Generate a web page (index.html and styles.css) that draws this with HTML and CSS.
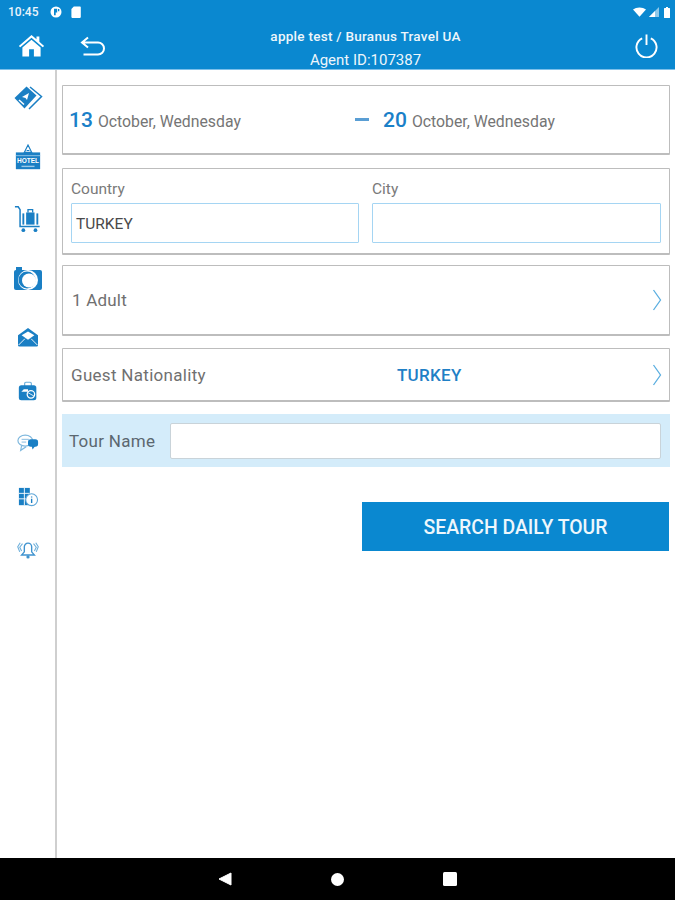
FILE: index.html
```html
<!DOCTYPE html>
<html lang="en">
<head>
<meta charset="utf-8">
<title>Daily Tour Search</title>
<link rel="stylesheet" href="styles.css">
</head>
<body>
<div class="screen">
  <header class="header">
    <div class="status">
      <div class="status-left">
        <span class="time">10:45</span>
        <svg class="st-ic" viewBox="0 0 12 12"><circle cx="6" cy="6" r="5.500" fill="#fff"/><path d="M4 2.800h3.200v3.600H5.700V9.200H4zM8 3h1.300v2.200H8z" fill="#0a88d0"/></svg>
        <svg class="st-ic" viewBox="0 0 12 12"><path d="M3.800 .5H10a.8.8 0 0 1 .8.8v9.800a.8.8 0 0 1-.8.8H2.200a.8.8 0 0 1-.8-.8V3z" fill="#fff"/></svg>
      </div>
      <div class="status-right">
        <svg class="wifi" viewBox="0 0 14 10"><path d="M0 2.200C3.800-.7 10.200-.7 14 2.200L7 10z" fill="#fff"/></svg>
        <svg class="signal" viewBox="0 0 10 10"><path d="M10 0v10H0z" fill="#fff" opacity=".55"/><path d="M6 4v6H0z" fill="#fff"/></svg>
        <svg class="battery" viewBox="0 0 6 11"><path d="M2 0h2v1h1.400a.6.6 0 0 1 .6.6v8.800a.6.6 0 0 1-.6.6H.6a.6.6 0 0 1-.6-.6V1.600a.6.6 0 0 1 .6-.6H2z" fill="#fff"/></svg>
      </div>
    </div>
    <div class="toolbar">
      <svg class="home" viewBox="0 0 28 24"><path d="M14 1 .8 12.400l1.500 1.500L14 3.900l11.700 10 1.500-1.500-5-4.300V2.500h-3v3z" fill="#fff"/><path d="M14 6 4.500 14v9.500h7V16h5v7.500h7V14z" fill="#fff"/></svg>
      <svg class="back" viewBox="0 0 26 20"><path d="M8 1.500 2 6.500l6 5M2.500 6.500H18a6 6 0 0 1 0 12H3.500" fill="none" stroke="#fff" stroke-width="2"/></svg>
      <div class="title">
        <div class="title-name">apple test / Buranus Travel UA</div>
        <div class="title-id">Agent ID:107387</div>
      </div>
      <svg class="power" viewBox="0 0 24 26"><path d="M7.500 5.500a10.500 10.500 0 1 0 9 0" fill="none" stroke="#fff" stroke-width="2"/><path d="M12 1.500v11" stroke="#fff" stroke-width="2"/></svg>
    </div>
  </header>

  <div class="main">
    <nav class="sidebar">
      <div class="nav-item h62"><svg class="ic" viewBox="0 0 30 26"><path d="M1.500 13 13.500 1.500l10 9-12 13z" fill="#1a7fc4"/><path d="m17 2 11.500 9.500L16 24" fill="none" stroke="#1a7fc4" stroke-width="1.500"/><path d="m9 12 7-4-2 7-1.500-2z" fill="#fff"/><path d="m6 15 5 4.500" stroke="#fff" stroke-width="1.500"/></svg></div>
      <div class="nav-item h59"><svg class="ic" viewBox="0 0 30 30"><path d="M15 1l-4 8h8zM13.500 7h3" fill="none" stroke="#1a7fc4" stroke-width="1.200"/><path d="M2 9h26v18H2z" fill="#1a7fc4"/><path d="M2 12.500h26" stroke="#8fc4e6"/><text x="15" y="20.500" class="hotel-text">HOTEL</text><path d="M8 24h14" stroke="#9cc9e8" stroke-width="1.500"/></svg></div>
      <div class="nav-item h61"><svg class="ic" viewBox="0 0 30 30"><path d="M1 2h3.500l2 3v18h21" fill="none" stroke="#1a7fc4" stroke-width="1.600"/><rect x="9" y="9" width="2" height="12" fill="#1a7fc4"/><rect x="13" y="8" width="9" height="13" fill="#1a7fc4"/><rect x="24" y="9" width="2" height="12" fill="#1a7fc4"/><path d="M15 8V5h5v3" fill="none" stroke="#1a7fc4" stroke-width="1.400"/><circle cx="10" cy="27" r="2" fill="#1a7fc4"/><circle cx="23" cy="27" r="2" fill="#1a7fc4"/></svg></div>
      <div class="nav-item h58"><svg class="ic" viewBox="0 0 30 26"><path d="M3 1h6v3H3z" fill="#1a7fc4"/><path d="M1 6a2 2 0 0 1 2-2h24a2 2 0 0 1 2 2v16a2 2 0 0 1-2 2H3a2 2 0 0 1-2-2z" fill="#1a7fc4"/><circle cx="15" cy="14" r="10" fill="#fff"/><circle cx="14" cy="14" r="8.500" fill="#1a7fc4"/><circle cx="16" cy="14.500" r="7" fill="#fff"/></svg></div>
      <div class="nav-item h53"><svg class="ic ic-sm" viewBox="0 0 24 22"><path d="M1 9 12 1l11 8v11a1.500 1.500 0 0 1-1.500 1.500h-19A1.500 1.500 0 0 1 1 20z" fill="#1a7fc4"/><path d="m5 9 7-4 7 4-7 5z" fill="#fff"/><path d="m1.500 20 7-7M22.500 20l-7-7" stroke="#fff"/></svg></div>
      <div class="nav-item h52b"><svg class="ic ic-sm" viewBox="0 0 24 24"><path d="M8 6V3a1.500 1.500 0 0 1 1.500-1.500h5A1.500 1.500 0 0 1 16 3v3" fill="none" stroke="#6aaedb" stroke-width="1.400"/><rect x="1" y="5" width="21" height="18" rx="3" fill="#1a7fc4"/><path d="M4 13h8v-3H7z" fill="#fff"/><circle cx="15.500" cy="16" r="4.500" fill="none" stroke="#fff" stroke-width="1.500"/><path d="m12 14 7 4" stroke="#fff"/></svg></div>
      <div class="nav-item h54"><svg class="ic ic-sm" viewBox="0 0 24 20"><ellipse cx="9" cy="7.500" rx="8" ry="6" fill="none" stroke="#7fb8de" stroke-width="1.300"/><path d="m5 13-1 5 6-4" fill="none" stroke="#7fb8de" stroke-width="1.300"/><path d="M5 6h8M5 9h5" stroke="#7fb8de"/><rect x="12" y="6" width="11" height="8" rx="3" fill="#1a7fc4"/><path d="m16 13 1 4 3-4z" fill="#1a7fc4"/></svg></div>
      <div class="nav-item h52"><svg class="ic ic-sm" viewBox="0 0 24 22"><rect x="2" y="1" width="12" height="19" fill="#1a7fc4"/><path d="M2 7h12M2 13h12M8 1v19" stroke="#fff"/><circle cx="16" cy="14" r="6.500" fill="#fff" stroke="#5ea6d8" stroke-width="1.200"/><path d="M16 10.500v1M16 13v4.500" stroke="#1a7fc4" stroke-width="1.500"/></svg></div>
      <div class="nav-item h52"><svg class="ic ic-sm" viewBox="0 0 24 20"><path d="M12 2.500a4 4 0 0 0-4 4V12l-3 3.500h14L16 12V6.500a4 4 0 0 0-4-4z" fill="none" stroke="#3f93cf" stroke-width="1.500"/><circle cx="12" cy="17.500" r="1.800" fill="#3f93cf"/><path d="M6 3 3 7l2 4M18 3l3 4-2 4M3.500 2 .8 6.500 3 12M20.500 2l2.700 4.500L21 12" fill="none" stroke="#6fb0db" stroke-width="1.200"/></svg></div>
    </nav>

    <section class="content">
      <div class="card dates">
        <div class="date date-from"><span class="day">13</span><span class="month">October, Wednesday</span></div>
        <span class="dash"></span>
        <div class="date"><span class="day">20</span><span class="month">October, Wednesday</span></div>
      </div>

      <div class="card places">
        <div class="field">
          <label class="field-label">Country</label>
          <div class="field-box">TURKEY</div>
        </div>
        <div class="field">
          <label class="field-label">City</label>
          <div class="field-box"></div>
        </div>
      </div>

      <div class="card row row-adult">
        <span class="row-label">1 Adult</span>
        <svg class="chev" viewBox="0 0 10 22"><path d="m1.500 1 7 10-7 10" fill="none" stroke="#5aaee0" stroke-width="1.300"/></svg>
      </div>

      <div class="card row row-nation">
        <span class="row-label">Guest Nationality</span>
        <span class="nation">TURKEY</span>
        <svg class="chev" viewBox="0 0 10 22"><path d="m1.500 1 7 10-7 10" fill="none" stroke="#5aaee0" stroke-width="1.300"/></svg>
      </div>

      <div class="tour">
        <span class="tour-label">Tour Name</span>
        <div class="tour-box"></div>
      </div>

      <div class="actions"><button class="search">SEARCH DAILY TOUR</button></div>
    </section>
  </div>

  <footer class="navbar">
    <svg class="nav-back" viewBox="0 0 14 14"><path d="M13 1v12L1 7z" fill="#fff" stroke="#fff" stroke-linejoin="round"/></svg>
    <span class="nav-home"></span>
    <span class="nav-square"></span>
  </footer>
</div>
</body>
</html>
```
FILE: styles.css
```css
* { box-sizing: border-box; }
html, body { margin: 0; padding: 0; }
body { background: #fff; font-family: Roboto, "Liberation Sans", sans-serif; }
.screen { width: 675px; height: 900px; display: flex; flex-direction: column; overflow: hidden; }

.header { height: 70px; flex: none; background: #0a88d0; border-bottom: 1px solid #7cc0ea; color: #fff; }
.status { height: 24px; display: flex; justify-content: space-between; align-items: center; padding: 0 5px 0 8px; }
.status-left { display: flex; align-items: center; }
.time { font-size: 12px; font-weight: 500; color: #eaf4fb; width: 42px; }
.st-ic { width: 12px; height: 12px; margin-right: 8px; }
.status-right { display: flex; align-items: center; gap: 2px; }
.wifi { width: 13px; height: 10px; }
.signal { width: 10px; height: 10px; margin-left: 1px; }
.battery { width: 6px; height: 11px; margin-left: 3px; }

.toolbar { height: 45px; display: flex; align-items: center; padding-left: 18px; padding-right: 17px; }
.home { width: 27px; height: 23px; margin-top: -2px; }
.back { width: 26px; height: 20px; margin-left: 35px; margin-top: -2px; }
.title { flex: 1; text-align: center; padding-right: 10px; padding-top: 2px; }
.title-name { font-size: 13.500px; font-weight: 500; letter-spacing: .27px; line-height: 24px; color: #eef6fb; }
.title-id { font-size: 15px; line-height: 24px; color: #eef6fb; }
.power { width: 23px; height: 25px; margin-top: -2px; }

.main { flex: 1; display: flex; min-height: 0; }
.sidebar { width: 57px; flex: none; border-right: 2px solid #cfcfcf; display: flex; flex-direction: column; }
.nav-item { display: flex; align-items: center; justify-content: center; flex: none; }
.h62 { height: 55px; }
.h59 { height: 60px; margin-top: 3px; }
.h61 { height: 61px; }
.h58 { height: 60px; }
.h53 { height: 56px; }
.h52b { height: 51px; }
.h54 { height: 54px; }
.h52 { height: 53px; }
.ic { width: 30px; height: 28px; }
.ic-sm { width: 22px; height: 20px; }

.content { flex: 1; padding: 15px 5px 0 5px; display: flex; flex-direction: column; }
.card { border: 1px solid #bdbdbd; border-bottom-width: 2px; background: #fff; border-radius: 1px; }
.dates { height: 70px; display: flex; align-items: center; padding-left: 6px; }
.date { display: flex; align-items: baseline; gap: 5px; }
.date-from { width: 286px; }
.day { font-size: 21px; font-weight: 500; color: #1a80c8; }
.month { font-size: 15.800px; color: #757575; }
.dash { width: 14px; height: 3px; background: #5a9ed4; margin-right: 14px; }

.places { margin-top: 13px; height: 87px; display: grid; grid-template-columns: 288px 289px; gap: 13px; padding: 11px 0 0 8px; }
.field-label { display: block; font-size: 15.500px; color: #7a7a7a; line-height: 18px; }
.field-box { margin-top: 5px; height: 40px; border: 1px solid #a5d5f3; border-radius: 1px; padding: 0 4px; font-size: 15.500px; line-height: 40px; color: #4a4a4a; }

.row { display: flex; align-items: center; padding-left: 8px; padding-right: 7px; }
.row-adult { margin-top: 10px; height: 71px; }
.row-nation { margin-top: 12px; height: 54px; }
.row-label { font-size: 17px; letter-spacing: .3px; color: #707070; }
.row-adult .row-label { letter-spacing: .2px; padding-left: 1px; }
.chev { width: 10px; height: 22px; margin-left: auto; }
.nation { font-size: 17px; font-weight: 500; color: #1f80c6; margin-left: 191px; letter-spacing: .3px; }

.tour { margin-top: 12px; height: 53px; background: #d4ecfa; display: flex; align-items: center; padding: 0 9px 0 7px; }
.tour-label { font-size: 17px; letter-spacing: .3px; color: #5b6770; width: 101px; flex: none; }
.tour-box { flex: 1; height: 36px; background: #fff; border: 1px solid #c9d3d9; border-radius: 2px; }

.actions { display: flex; justify-content: flex-end; margin-top: 35px; padding-right: 1px; }
.search { width: 307px; height: 49px; border: 0; background: #0a88d0; color: #eef7fc; font-family: inherit; font-size: 19.400px; font-weight: 500; padding: 2px 0 0; }

.navbar { height: 42px; flex: none; background: #000; display: flex; align-items: center; padding-left: 218px; }
.nav-back { width: 14px; height: 14px; }
.nav-home { width: 13px; height: 13px; border-radius: 50%; background: #fff; margin-left: 99px; }
.nav-square { width: 14px; height: 14px; border-radius: 1.500px; background: #fff; margin-left: 99px; }

.hotel-text { font-family: "Liberation Sans", sans-serif; font-size: 7px; font-weight: 700; fill: #fff; text-anchor: middle; }
```
